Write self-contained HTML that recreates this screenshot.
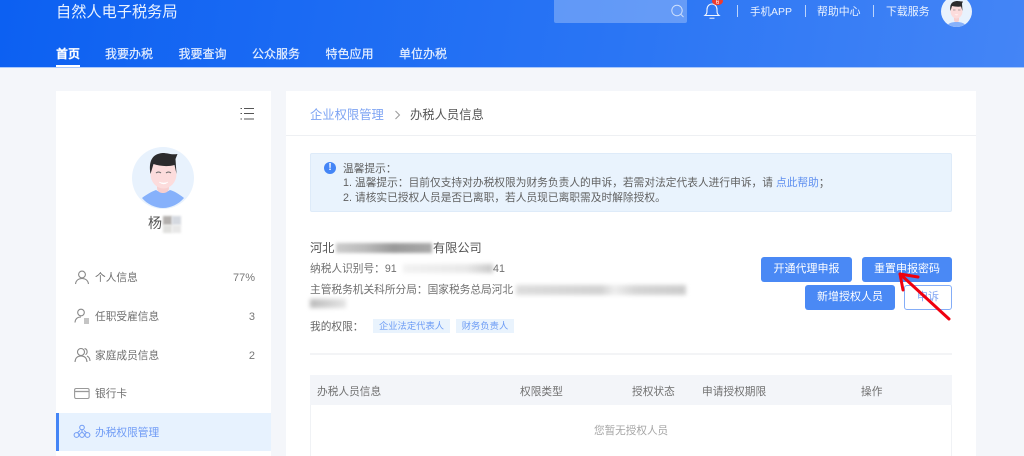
<!DOCTYPE html>
<html lang="zh"><head><meta charset="utf-8"><title>办税权限管理</title>
<style>
*{margin:0;padding:0;box-sizing:border-box}
html,body{width:1024px;height:456px;overflow:hidden;background:#f4f6fa}
body{position:relative;font-family:"Liberation Sans","Noto Sans CJK SC",sans-serif;color:#555;font-size:11px;filter:blur(.3px)}
.a{position:absolute}
.t{position:absolute;white-space:nowrap;line-height:16px;height:16px}
.hd{left:0;top:0;width:1024px;height:68px;background:linear-gradient(100deg,#0c60f2 0%,#2a75f4 60%,#4485f6 100%);border-bottom:1px solid #a9c8fb}
.w{color:#eaf2ff}
.nav{font-size:12px;color:#e6efff;top:46px;-webkit-text-stroke:.2px #e6efff}
.menu{font-size:10.7px;color:#6f6f6f;left:95px}
.num{font-size:11px;color:#777;right:769px}
.btn{position:absolute;background:#4a89f5;color:#fff;border-radius:3px;font-size:11px;text-align:center;line-height:25px;height:25px}
.tag{position:absolute;background:#e9f3fd;color:#6d9cf5;font-size:9.300px;text-align:center;height:14px;line-height:15px;top:319px}
.bl{position:absolute;filter:blur(2px)}
.th{top:384px;font-size:10.700px;color:#707070}
.al{font-size:10.700px;letter-spacing:.03px;color:#606060;left:343px}
.p{font-family:"Noto Sans CJK TC",sans-serif}
</style></head><body>
<div class="a hd"></div>
<div class="t w" style="left:56px;top:3px;font-size:15.2px;line-height:19px;height:19px">自然人电子税务局</div>
<div class="t nav" style="left:56px;font-weight:bold;color:#fff">首页</div>
<div class="a" style="left:56px;top:65px;width:24px;height:2px;background:#fff"></div>
<div class="t nav" style="left:105px">我要办税</div>
<div class="t nav" style="left:178.5px">我要查询</div>
<div class="t nav" style="left:252px">公众服务</div>
<div class="t nav" style="left:325.5px">特色应用</div>
<div class="t nav" style="left:399px">单位办税</div>
<div class="a" style="left:554px;top:0;width:133px;height:23px;background:rgba(255,255,255,.27);border-radius:0 0 2px 2px"></div>
<svg class="a" style="left:668px;top:3px" width="20" height="16" viewBox="0 0 20 16"><circle cx="9" cy="7.500" r="5.200" fill="none" stroke="#cfe0fc" stroke-width="1"/><path d="M13 11.500l2.500 2.500" stroke="#cfe0fc" stroke-width="1"/></svg>
<svg class="a" style="left:700px;top:0" width="26" height="20" viewBox="0 0 26 20"><path d="M5 15.500c2-1.500 2-3 2-6 0-3 2-5.500 5-5.500s5 2.500 5 5.500c0 3 0 4.500 2 6z" fill="none" stroke="#f0f6ff" stroke-width="1.100"/><path d="M9.500 18.200h5" stroke="#f0f6ff" stroke-width="1"/><ellipse cx="17.500" cy="1.300" rx="5.500" ry="3.800" fill="#ef3b2d"/><text x="17.500" y="4" font-size="6" fill="#fff" text-anchor="middle">6</text></svg>
<div class="a" style="left:737px;top:5px;width:1px;height:12px;background:#bcd4fb"></div>
<div class="a" style="left:805px;top:5px;width:1px;height:12px;background:#bcd4fb"></div>
<div class="a" style="left:873px;top:5px;width:1px;height:12px;background:#bcd4fb"></div>
<div class="t w" style="left:750px;top:4px;font-size:10.500px">手机APP</div>
<div class="t w" style="left:817px;top:4px;font-size:10.900px">帮助中心</div>
<div class="t w" style="left:886px;top:4px;font-size:10.900px">下载服务</div>
<svg class="a" style="left:941px;top:-4px" width="31" height="31" viewBox="0 0 62 62"><defs><clipPath id="c1"><circle cx="31" cy="31" r="31"/></clipPath></defs><g clip-path="url(#c1)"><rect width="62" height="62" fill="#e8f2fd"/><path d="M10 62c4-8 12-10 21-10s17 2 21 10z" fill="#86b1fb"/><rect x="26" y="38" width="10" height="14" rx="4" fill="#f7cfcf"/><ellipse cx="31" cy="30" rx="12" ry="15" fill="#fcdcdc"/><path d="M19 30c-2-11 1-19 12-20 6 0 8 1 13 1l-2 4 1 15-3-9c-6 1-13 0-18-1z" fill="#2b2b2d"/><path d="M24 28h5M34 28h5" stroke="#666" stroke-width="1.200"/><path d="M27 37q4 3 8 0z" fill="#fff"/></g></svg>

<div class="a" style="left:56px;top:91px;width:215px;height:365px;background:#fff"></div>
<div class="a" style="left:286px;top:91px;width:690px;height:365px;background:#fff"></div>

<svg class="a" style="left:239px;top:107px" width="16" height="14" viewBox="0 0 16 14"><path d="M5 1.500h10M5 6.500h10M5 12h10" stroke="#555" stroke-width="1.100"/><path d="M1.500 1.500h1.500M1.500 6.500h1.500M1.500 12h1.500" stroke="#555" stroke-width="1.100"/></svg>
<svg class="a" style="left:132px;top:147px" width="62" height="62" viewBox="0 0 62 62"><defs><clipPath id="c2"><circle cx="31" cy="31" r="31"/></clipPath></defs><g clip-path="url(#c2)"><rect width="62" height="62" fill="#e8f2fd"/><path d="M10 51c5-4 11-7 14-8 4 3 10 3 14 0 4 1 9 4 14 8-5 6-13 10-21 10s-16-4-21-10z" fill="#86b1fb"/><rect x="25" y="34" width="12" height="12" rx="5" fill="#f7cfcf"/><ellipse cx="31.500" cy="27" rx="13" ry="14.500" fill="#fcdcdc"/><path d="M18.500 27c-2-12 1-20 12-21 6 0 8 2 15 1l-2 5 1 15-2-9c-7 2-15 1-21-1z" fill="#2b2b2d"/><path d="M24 26q2.500-2 5 0M34 26q2.500-2 5 0" fill="none" stroke="#666" stroke-width="1"/><path d="M27 35q5 2 9 0q-4 4-9 0z" fill="#fff" stroke="#fff" stroke-width=".5"/></g></svg>
<div class="t" style="left:148px;top:215px;font-size:14px;color:#555">杨</div>
<div class="a" style="left:163px;top:216px;width:9px;height:9px;background:#b3b0ae;filter:blur(1px)"></div>
<div class="a" style="left:172px;top:216px;width:9px;height:9px;background:#d5d9e0;filter:blur(1px)"></div>
<div class="a" style="left:163px;top:225px;width:9px;height:8px;background:#e0e0de;filter:blur(1px)"></div>
<div class="a" style="left:172px;top:225px;width:9px;height:8px;background:#e8e8e8;filter:blur(1px)"></div>

<svg class="a" style="left:74px;top:270px" width="16" height="15" viewBox="0 0 16 15" fill="none" stroke="#888" stroke-width="1.100"><circle cx="8" cy="4.500" r="3.400"/><path d="M1.500 14c.5-3.500 3-5.500 6.500-5.500s6 2 6.500 5.500"/></svg>
<div class="t menu" style="top:270px">个人信息</div><div class="t num" style="top:270px">77%</div>
<svg class="a" style="left:74px;top:308px" width="16" height="16" viewBox="0 0 16 16" fill="none" stroke="#888" stroke-width="1.100"><circle cx="7" cy="4.500" r="3.300"/><path d="M1 14.500c.3-3.500 2.500-5.500 6-5.500"/><path d="M10 11h5M10 13h5M10 15h5"/></svg>
<div class="t menu" style="top:309px">任职受雇信息</div><div class="t num" style="top:309px">3</div>
<svg class="a" style="left:74px;top:347px" width="17" height="16" viewBox="0 0 17 16" fill="none" stroke="#888" stroke-width="1.100"><circle cx="7" cy="5" r="3.500"/><path d="M1 15c.3-4 2.500-6 6-6s5.700 2 6 6"/><path d="M10.500 1.700c3 0 3.500 4.500 1 6M13 9c2 1 3 3 3 5"/></svg>
<div class="t menu" style="top:348px">家庭成员信息</div><div class="t num" style="top:348px">2</div>
<svg class="a" style="left:74px;top:387px" width="16" height="13" viewBox="0 0 16 13" fill="none" stroke="#999" stroke-width="1.100"><rect x=".6" y="1.500" width="14.500" height="10" rx="1.500"/><path d="M.6 4.500h14.500" stroke-width="1.300"/></svg>
<div class="t menu" style="top:386px">银行卡</div>
<div class="a" style="left:56px;top:413px;width:215px;height:38px;background:#e7f2fe"></div>
<div class="a" style="left:56px;top:413px;width:3px;height:38px;background:#4485f6"></div>
<svg class="a" style="left:73px;top:424px" width="18" height="15" viewBox="0 0 18 15" fill="none" stroke="#6f9bf5" stroke-width="1"><circle cx="9" cy="3.500" r="2.300"/><circle cx="3.500" cy="11" r="2.400"/><circle cx="9" cy="11" r="2.400"/><circle cx="14.500" cy="11" r="2.400"/><path d="M9 6v2.500M7 6.500L4.500 8.700M11 6.500l2.500 2.200"/></svg>
<div class="t menu" style="top:425px;color:#6f9bf5">办税权限管理</div>

<div class="t" style="left:310px;top:107px;font-size:12.300px;color:#7ea4f3">企业权限管理</div>
<svg class="a" style="left:393px;top:109px" width="10" height="12" viewBox="0 0 10 12"><path d="M2.500 2l4 4-4 4" fill="none" stroke="#999" stroke-width="1"/></svg>
<div class="t" style="left:410px;top:107px;font-size:12.300px;color:#555">办税人员信息</div>
<div class="a" style="left:286px;top:135px;width:690px;height:1px;background:#eef0f3"></div>

<div class="a" style="left:310px;top:153px;width:642px;height:59px;background:#e9f3fd;border:1px solid #deebf9;border-radius:2px"></div>
<div class="a" style="left:324px;top:162px;width:12px;height:12px;border-radius:50%;background:#4485f6;color:#fff;font-size:10px;font-weight:bold;text-align:center;line-height:12px">!</div>
<div class="t al" style="top:161px">温馨提示<span class="p">：</span></div>
<div class="t al" style="top:175px">1. 温馨提示<span class="p">：</span>目前仅支持对办税权限为财务负责人的申诉<span class="p">，</span>若需对法定代表人进行申诉<span class="p">，</span>请 <span style="color:#5e8ff0">点此帮助</span><span class="p">；</span></div>
<div class="t al" style="top:190px">2. 请核实已授权人员是否已离职<span class="p">，</span>若人员现已离职需及时解除授权<span class="p">。</span></div>

<div class="t" style="left:310px;top:240px;font-size:12.200px;color:#555">河北</div>
<div class="bl" style="left:336px;top:243px;width:96px;height:10px;background:linear-gradient(90deg,#ccc,#bbb 30%,#999 60%,#aaa);filter:blur(1.500px)"></div>
<div class="t" style="left:433px;top:240px;font-size:12.200px;color:#555">有限公司</div>
<div class="t" style="left:310px;top:261px;font-size:10.700px;color:#707070">纳税人识别号<span class="p">：</span>91</div>
<div class="bl" style="left:403px;top:264px;width:90px;height:9px;background:linear-gradient(90deg,#f2f2f2,#e9e9e9 70%,#c8c8c8)"></div>
<div class="t" style="left:493px;top:261px;font-size:10.700px;color:#707070">41</div>
<div class="t" style="left:310px;top:282px;font-size:10.700px;color:#707070">主管税务机关科所分局<span class="p">：</span>国家税务总局河北</div>
<div class="bl" style="left:516px;top:285px;width:170px;height:10px;background:linear-gradient(90deg,#ddd,#d2d2d2 50%,#eee 58%,#d5d5d5 70%,#ccc)"></div>
<div class="bl" style="left:310px;top:299px;width:36px;height:9px;background:linear-gradient(90deg,#bbb,#e5e5e5)"></div>
<div class="t" style="left:310px;top:319px;font-size:10.700px;color:#666">我的权限<span class="p">：</span></div>
<div class="tag" style="left:373px;width:77px">企业法定代表人</div>
<div class="tag" style="left:456px;width:58px">财务负责人</div>

<div class="btn" style="left:761px;top:257px;width:91px">开通代理申报</div>
<div class="btn" style="left:862px;top:257px;width:90px">重置申报密码</div>
<div class="btn" style="left:805px;top:285px;width:90px">新增授权人员</div>
<div class="btn" style="left:904px;top:285px;width:48px;background:#fff;border:1px solid #84adf7;color:#7ea4f3;line-height:23px">申诉</div>
<svg class="a" style="left:890px;top:262px" width="70" height="64" viewBox="0 0 70 64"><path d="M59 57L10 12M10 12l18 3M10 12l3 16" fill="none" stroke="#f0000f" stroke-width="3" stroke-linecap="round"/></svg>

<div class="a" style="left:310px;top:353px;width:642px;height:2px;background:#f3f4f6"></div>
<div class="a" style="left:310px;top:375px;width:642px;height:81px;border:1px solid #f0f2f5;border-bottom:0"></div>
<div class="a" style="left:310px;top:375px;width:642px;height:30px;background:#f3f5f9"></div>
<div class="t th" style="left:317px">办税人员信息</div>
<div class="t th" style="left:520px">权限类型</div>
<div class="t th" style="left:632px">授权状态</div>
<div class="t th" style="left:702px">申请授权期限</div>
<div class="t th" style="left:861px">操作</div>
<div class="t" style="left:594px;top:423px;font-size:10.600px;color:#a5a5a5">您暂无授权人员</div>
</body></html>
